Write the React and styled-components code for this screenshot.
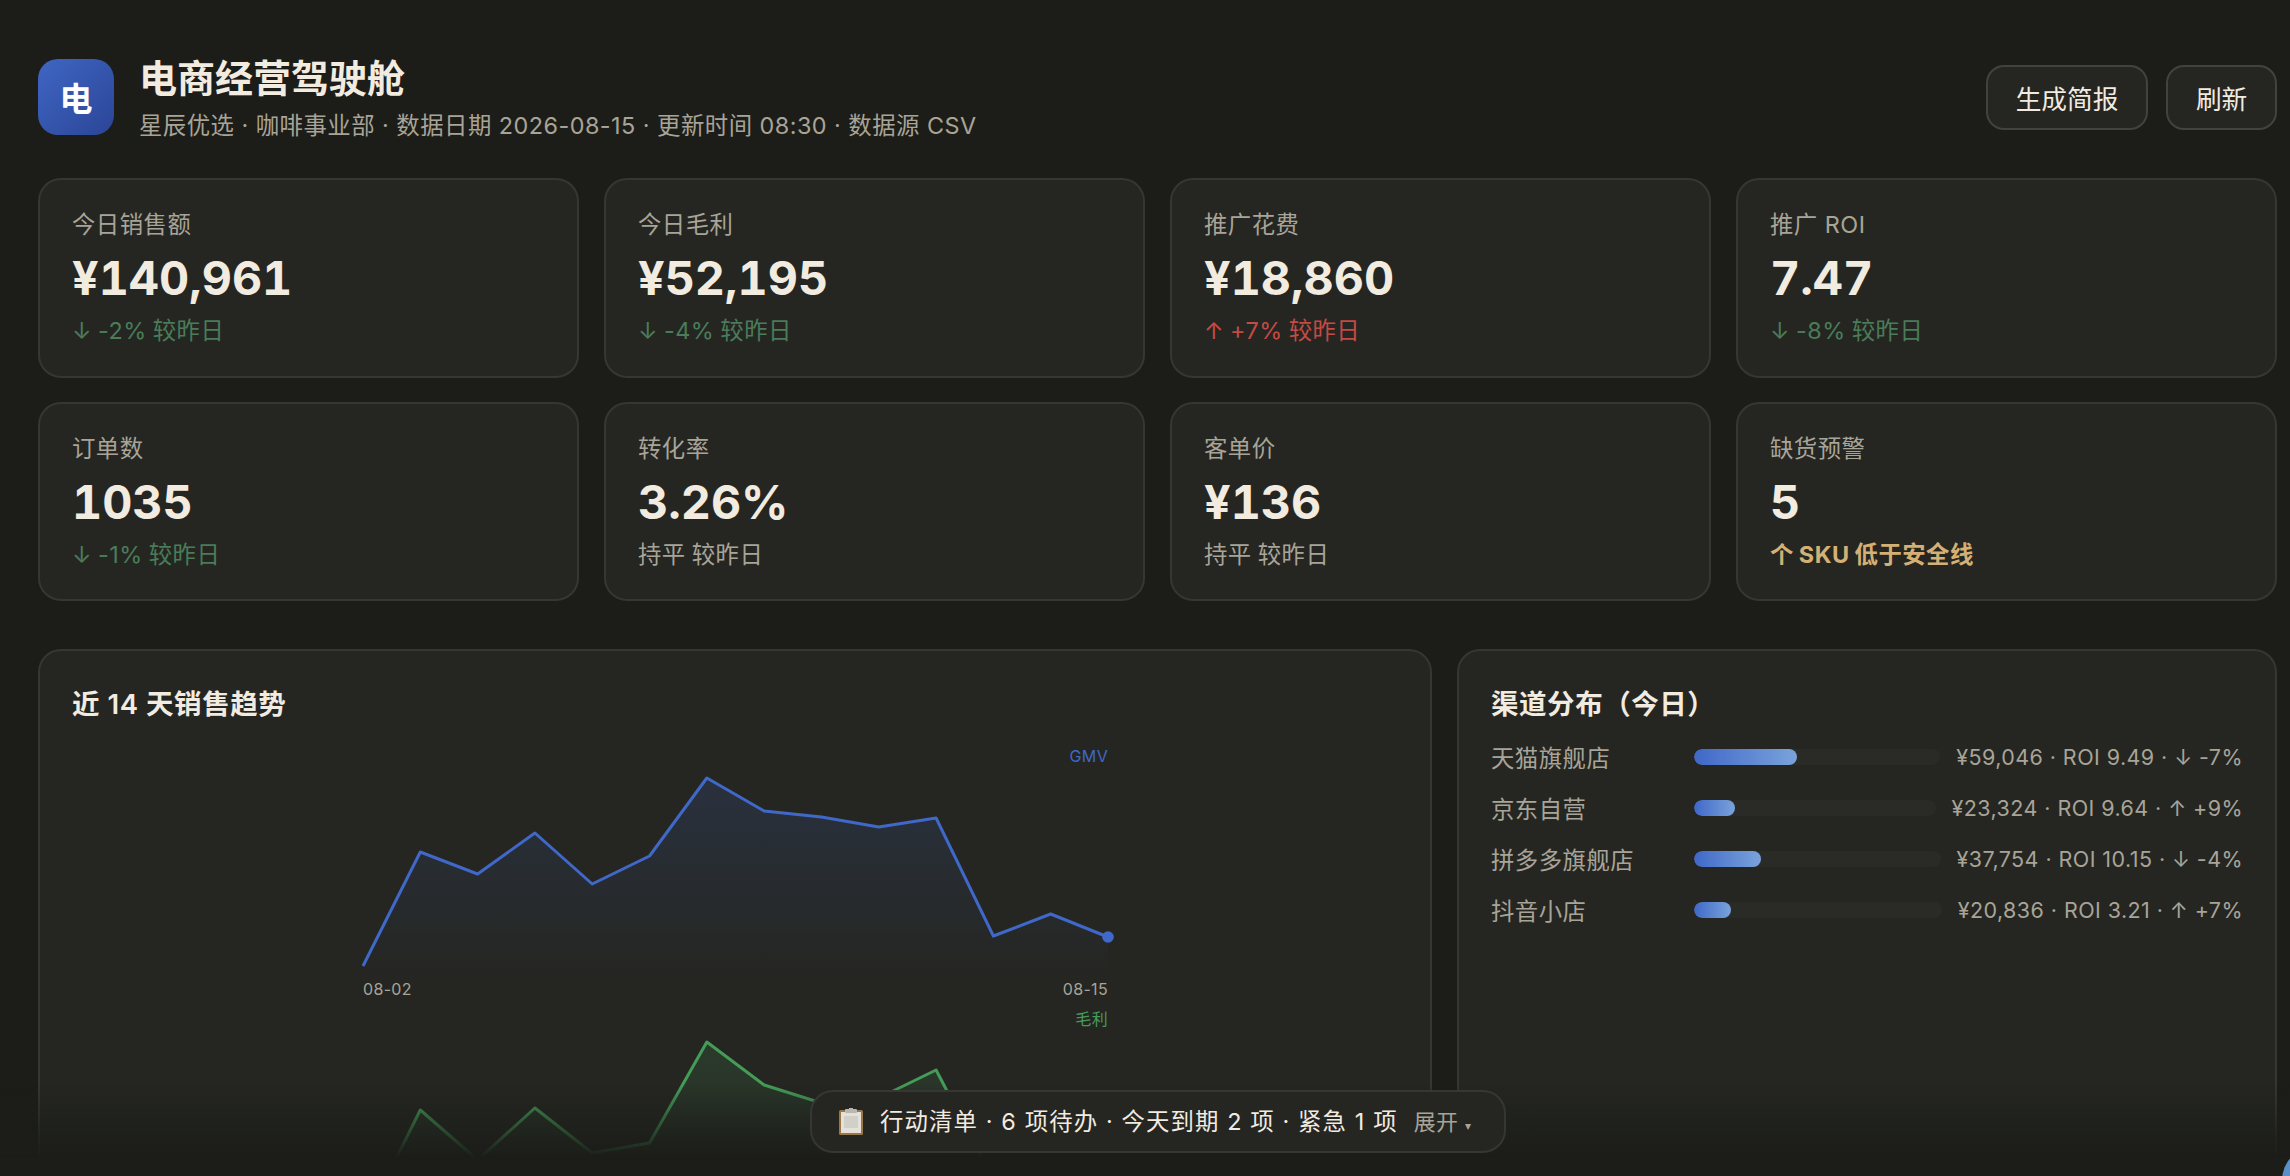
import React from "react";
import styled, { createGlobalStyle } from "styled-components";

const GlobalStyle = createGlobalStyle`
  html, body {
    margin: 0;
    height: 100%;
    overflow: hidden;
    background: #1c1d19;
    font-family: Inter, "Noto Sans CJK SC", sans-serif;
    color: #f2ebe0;
  }
  #root {
    height: 100%;
  }
`;

const Page = styled.div`
  height: 1176px;
  width: 2315px;
  box-sizing: border-box;
  padding: 59px 38px 0;
  overflow: hidden;
`;

const Header = styled.header`
  display: flex;
  align-items: center;
  justify-content: space-between;
  height: 76px;
  margin-bottom: 43px;
`;

const Brand = styled.div`
  display: flex;
  align-items: center;
  gap: 25px;
`;

const Logo = styled.div`
  width: 76px;
  height: 76px;
  border-radius: 20px;
  background: linear-gradient(135deg, #3f66c4, #2b4596);
  color: #fff;
  display: flex;
  align-items: center;
  justify-content: center;
  font-size: 33px;
  font-weight: 600;
`;

const BrandText = styled.div`
  padding-top: 3px;
`;

const Title = styled.h1`
  margin: 0 0 9px;
  font-size: 38px;
  line-height: 46px;
  font-weight: 600;
`;

const Sub = styled.div`
  font-size: 23.4px;
  line-height: 32px;
  letter-spacing: 0.02em;
  color: #a8a498;
`;

const Actions = styled.div`
  display: flex;
  gap: 18px;
`;

const Button = styled.button`
  height: 65px;
  padding: 0 27.75px;
  border-radius: 18px;
  border: 2px solid #42433c;
  background: #252622;
  color: #f2ebe0;
  font-family: inherit;
  font-size: 25.7px;
`;

const KpiGrid = styled.section`
  display: grid;
  grid-template-columns: repeat(4, 1fr);
  gap: 24px 25px;
  margin-bottom: 48px;
`;

const Card = styled.div`
  box-sizing: border-box;
  background: #252622;
  border: 2px solid #363732;
  border-radius: 23px;
`;

const Kpi = styled(Card)`
  height: 199.5px;
  padding: 27px 32px;
`;

const KpiLabel = styled.div`
  font-size: 23.4px;
  line-height: 36px;
  letter-spacing: 0.02em;
  color: #a8a498;
`;

const KpiValue = styled.div`
  margin: 7px 0 8px;
  font-size: 46.7px;
  line-height: 56px;
  font-weight: 700;
  font-variant-numeric: tabular-nums;
`;

const deltaColors = {
  down: "#4a7c59",
  up: "#c44a44",
  flat: "#a8a498",
  warn: "#d4b074",
};

const KpiDelta = styled.div`
  font-size: 23.4px;
  line-height: 34px;
  letter-spacing: 0.02em;
  word-spacing: -1px;
  color: ${(p) => deltaColors[p.$tone]};
  font-weight: ${(p) => (p.$tone === "warn" ? 700 : 400)};
`;

const Panels = styled.section`
  display: grid;
  grid-template-columns: 1.7fr 1fr;
  gap: 25px;
  height: 600px;
`;

const Panel = styled(Card)`
  padding: 33px 32px;
`;

const PanelTitle = styled.h2`
  margin: 0;
  font-size: 27.5px;
  line-height: 40px;
  letter-spacing: 0.02em;
  font-weight: 600;
`;

const Charts = styled.div`
  display: flex;
  flex-direction: column;
  align-items: center;
  margin-top: 16px;
`;

const ChartSvg = styled.svg`
  display: block;
  overflow: visible;
`;

const ChartLabel = styled.text`
  font-size: 16px;
  font-family: Inter, "Noto Sans CJK SC", sans-serif;
  letter-spacing: 0.02em;
  fill: ${(p) => p.$color};
`;

const ChannelList = styled.div`
  display: flex;
  flex-direction: column;
  gap: 17px;
  margin-top: 16px;
`;

const ChannelRow = styled.div`
  display: flex;
  align-items: center;
  gap: 16px;
  height: 34px;
`;

const ChannelName = styled.div`
  width: 187px;
  flex: none;
  font-size: 23.4px;
  letter-spacing: 0.02em;
  color: #a8a498;
`;

const Track = styled.div`
  flex: 1;
  height: 16px;
  border-radius: 8px;
  background: #2a2b27;
  overflow: hidden;
`;

const Fill = styled.div`
  height: 100%;
  border-radius: 8px;
  background: linear-gradient(90deg, #3f68c8, #7aa3dc);
`;

const ChannelValue = styled.div`
  flex: none;
  font-size: 21.5px;
  letter-spacing: 0.02em;
  color: #a8a498;
`;

const Fade = styled.div`
  position: fixed;
  left: 0;
  right: 0;
  bottom: 0;
  height: 92px;
  background: linear-gradient(to bottom, rgba(28, 29, 25, 0), #1c1d19 80%);
  pointer-events: none;
`;

const ActionBar = styled.div`
  position: fixed;
  left: 810px;
  bottom: 23px;
  box-sizing: border-box;
  width: 696px;
  height: 63px;
  display: flex;
  align-items: center;
  gap: 17px;
  padding: 0 22px 0 27px;
  background: #252622;
  border: 2px solid #363732;
  border-radius: 23px;
  font-size: 23.4px;
  letter-spacing: 0.048em;
  white-space: nowrap;
`;

const ActionText = styled.span`
  padding-bottom: 3px;
`;

const Expand = styled.span`
  margin-left: -1px;
  padding-bottom: 3px;
  font-size: 21.9px;
  letter-spacing: 0.02em;
  color: #a8a498;
`;

const Caret = styled.span`
  font-size: 12px;
  margin-left: 7px;
`;

const FloatBtn = styled.div`
  position: fixed;
  left: 2281.5px;
  top: 1145.5px;
  width: 69px;
  height: 69px;
  border-radius: 50%;
  background: #5a8fc8;
`;

const kpis = [
  { label: "今日销售额", value: "¥140,961", delta: "↓ -2% 较昨日", tone: "down" },
  { label: "今日毛利", value: "¥52,195", delta: "↓ -4% 较昨日", tone: "down" },
  { label: "推广花费", value: "¥18,860", delta: "↑ +7% 较昨日", tone: "up" },
  { label: "推广 ROI", value: "7.47", delta: "↓ -8% 较昨日", tone: "down" },
  { label: "订单数", value: "1035", delta: "↓ -1% 较昨日", tone: "down" },
  { label: "转化率", value: "3.26%", delta: "持平 较昨日", tone: "flat" },
  { label: "客单价", value: "¥136", delta: "持平 较昨日", tone: "flat" },
  { label: "缺货预警", value: "5", delta: "个 SKU 低于安全线", tone: "warn" },
];

const channels = [
  { name: "天猫旗舰店", pct: 42, text: "¥59,046 · ROI 9.49 · ↓ -7%" },
  { name: "京东自营", pct: 17, text: "¥23,324 · ROI 9.64 · ↑ +9%" },
  { name: "拼多多旗舰店", pct: 27, text: "¥37,754 · ROI 10.15 · ↓ -4%" },
  { name: "抖音小店", pct: 15, text: "¥20,836 · ROI 3.21 · ↑ +7%" },
];

const gmv = [226, 112, 134, 93, 144, 116, 38, 71, 77, 87, 78, 196, 174, 197];
const profit = [222, 107, 157, 105, 150, 140, 39, 82, 100, 95, 67, 177, 157, 182];

const Trend = ({ id, data, color, name, labels, height }) => {
  const xs = data.map((_, i) => (i * 745) / 13);
  const line = data.map((y, i) => `${xs[i]},${y}`).join(" ");
  return (
    <ChartSvg width="745" height={height} viewBox={`0 0 745 ${height}`}>
      <defs>
        <linearGradient id={id} x1="0" y1="0" x2="0" y2="1">
          <stop offset="0" stopColor={color} stopOpacity="0.17" />
          <stop offset="1" stopColor={color} stopOpacity="0" />
        </linearGradient>
      </defs>
      <ChartLabel x="745" y="22" textAnchor="end" $color={color}>
        {name}
      </ChartLabel>
      <polygon points={`0,240 ${line} 745,240`} fill={`url(#${id})`} />
      <polyline points={line} fill="none" stroke={color} strokeWidth="3" strokeLinejoin="round" />
      <circle cx="745" cy={data[13]} r="5.8" fill={color} />
      {labels && (
        <>
          <ChartLabel x="0" y="255" $color="#a8a498">
            08-02
          </ChartLabel>
          <ChartLabel x="745" y="255" textAnchor="end" $color="#a8a498">
            08-15
          </ChartLabel>
        </>
      )}
    </ChartSvg>
  );
};

const Clipboard = () => (
  <svg width="24" height="27" viewBox="0 0 24 27">
    <rect x="0" y="2" width="24" height="25" rx="1.5" fill="#9a7748" />
    <rect x="2" y="4" width="20" height="21" fill="#e4e1da" />
    <rect x="5" y="8" width="14" height="12" fill="#d2cfc8" />
    <rect x="6" y="1" width="12" height="4" rx="1" fill="#b9b7b1" />
    <rect x="10" y="0" width="4" height="2" fill="#b9b7b1" />
  </svg>
);

export default function App() {
  return (
    <>
      <GlobalStyle />
      <Page>
        <Header>
          <Brand>
            <Logo>电</Logo>
            <BrandText>
              <Title>电商经营驾驶舱</Title>
              <Sub>星辰优选 · 咖啡事业部 · 数据日期 2026-08-15 · 更新时间 08:30 · 数据源 CSV</Sub>
            </BrandText>
          </Brand>
          <Actions>
            <Button>生成简报</Button>
            <Button>刷新</Button>
          </Actions>
        </Header>

        <KpiGrid>
          {kpis.map((k) => (
            <Kpi key={k.label}>
              <KpiLabel>{k.label}</KpiLabel>
              <KpiValue>{k.value}</KpiValue>
              <KpiDelta $tone={k.tone}>{k.delta}</KpiDelta>
            </Kpi>
          ))}
        </KpiGrid>

        <Panels>
          <Panel>
            <PanelTitle>近 14 天销售趋势</PanelTitle>
            <Charts>
              <Trend id="gmvFill" data={gmv} color="#3f68c8" name="GMV" labels height="263" />
              <Trend id="profitFill" data={profit} color="#459c58" name="毛利" height="240" />
            </Charts>
          </Panel>
          <Panel>
            <PanelTitle>渠道分布（今日）</PanelTitle>
            <ChannelList>
              {channels.map((c) => (
                <ChannelRow key={c.name}>
                  <ChannelName>{c.name}</ChannelName>
                  <Track>
                    <Fill style={{ width: `${c.pct}%` }} />
                  </Track>
                  <ChannelValue>{c.text}</ChannelValue>
                </ChannelRow>
              ))}
            </ChannelList>
          </Panel>
        </Panels>
      </Page>
      <Fade />
      <ActionBar>
        <Clipboard />
        <ActionText>行动清单 · 6 项待办 · 今天到期 2 项 · 紧急 1 项</ActionText>
        <Expand>
          展开<Caret>▾</Caret>
        </Expand>
      </ActionBar>
      <FloatBtn />
    </>
  );
}
